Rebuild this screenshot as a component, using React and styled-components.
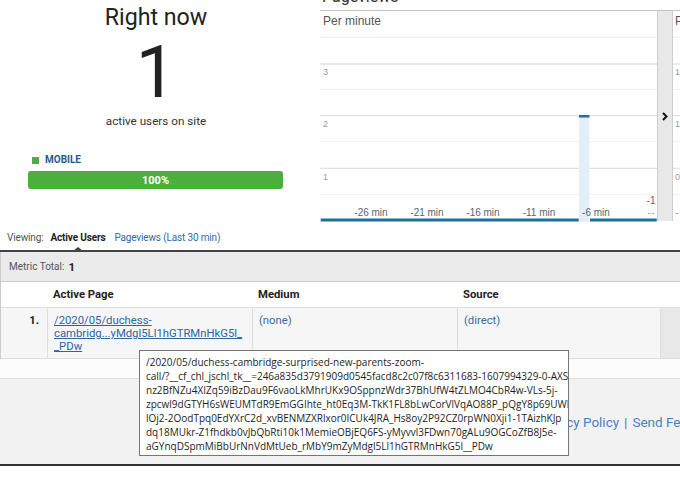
import React from 'react';
import styled, { createGlobalStyle } from 'styled-components';

const Global = createGlobalStyle`
  *, *::before, *::after { box-sizing: border-box; }
  html, body { margin: 0; padding: 0; background: #fff; }
  body {
    font-family: Roboto, "Noto Sans", Arial, sans-serif;
    color: #222;
    overflow: hidden;
  }
`;

const Page = styled.div`
  position: relative;
  width: 680px;
  height: 500px;
  overflow: hidden;
  background: #fff;
`;

const Top = styled.div`
  display: flex;
  height: 230px;
`;

const NowPanel = styled.section`
  width: 312px;
  flex: none;
  display: flex;
  flex-direction: column;
  align-items: center;
  padding-top: 3px;
`;

const NowTitle = styled.h1`
  margin: 0;
  font-size: 23.2px;
  line-height: 28px;
  font-weight: 400;
  color: #222;
`;

const NowCount = styled.div`
  margin-top: 6px;
  font-size: 72px;
  line-height: 72px;
  font-weight: 400;
  color: #222;
`;

const NowLabel = styled.div`
  margin-top: 5px;
  font-size: 11.7px;
  line-height: 14px;
  color: #333;
`;

const DeviceBlock = styled.div`
  align-self: stretch;
  padding: 0 29px 0 28px;
  margin-top: 26px;
`;

const Legend = styled.div`
  display: flex;
  align-items: center;
  gap: 6px;
  padding-left: 4px;
  font-size: 10px;
  line-height: 12px;
  font-weight: 700;
  color: #1f5a92;
`;

const Swatch = styled.span`
  width: 7px;
  height: 7px;
  background: ${p => p.$color};
`;

const ShareBar = styled.div`
  margin-top: 5px;
  height: 18px;
  border-radius: 3px;
  background: ${p => p.$color};
  color: #fff;
  font-size: 11px;
  font-weight: 700;
  display: flex;
  align-items: center;
  justify-content: center;
`;

const ChartColumn = styled.section`
  flex: 1;
  min-width: 0;
  margin: -13px 0 0 8px;
  display: flex;
  flex-direction: column;
`;

const ChartTitle = styled.h2`
  margin: 0 0 3px 2px;
  font-size: 16px;
  line-height: 20px;
  font-weight: 400;
  color: #333;
`;

const ChartRow = styled.div`
  display: flex;
  border-top: 1px solid #c4c4c4;
  height: 212px;
`;

const ChartPanel = styled.div`
  width: 337px;
  flex: none;
  svg { display: block; }
`;

const ScrollHandle = styled.div`
  width: 16px;
  flex: none;
  height: 210px;
  background: #e8e8e8;
  border-left: 1px solid #cdcdcd;
  border-right: 1px solid #cdcdcd;
  display: flex;
  align-items: center;
  justify-content: center;
`;

const NextPanel = styled.div`
  flex: 1;
  overflow: hidden;
  svg { display: block; }
`;

const ViewingBar = styled.nav`
  height: 22px;
  display: flex;
  align-items: center;
  padding: 0 0 5px 7px;
  font-size: 10px;
  letter-spacing: -0.15px;
  border-bottom: 2px solid #444;
`;

const ViewLabel = styled.span`
  color: #555;
  margin-right: 7px;
`;

const ViewTab = styled.span`
  position: relative;
  margin-right: 9px;
  color: ${p => (p.$active ? '#222' : '#2f6aa6')};
  font-weight: ${p => (p.$active ? 700 : 400)};
  ${p =>
    p.$active &&
    `
    &::after {
      content: '';
      position: absolute;
      left: 50%;
      bottom: -8px;
      margin-left: -5px;
      border-left: 5px solid transparent;
      border-right: 5px solid transparent;
      border-bottom: 4px solid #444;
    }
  `}
`;

const MetricBar = styled.div`
  height: 30px;
  display: flex;
  align-items: center;
  gap: 4px;
  padding-left: 8px;
  background: #ebebeb;
  border-left: 1px solid #ccc;
  border-bottom: 1px solid #ccc;
  font-size: 10px;
  color: #555;
  b { color: #222; font-size: 11.5px; }
`;

const Table = styled.div`
  border-left: 1px solid #ccc;
`;

const Row = styled.div`
  display: grid;
  grid-template-columns: 46px 205px 205px 203px 1fr;
  height: ${p => p.$h}px;
  border-bottom: 1px solid #ddd;
`;

const HeadCell = styled.div`
  padding: 0 6px;
  font-size: 11.3px;
  line-height: 25px;
  font-weight: 700;
  color: #222;
`;

const Cell = styled.div`
  padding: 6px 6px 0;
  font-size: 11.3px;
  line-height: 13px;
  background: ${p => p.$bg || '#f6f6f6'};
  border-left: ${p => (p.$first ? 'none' : '1px solid #dedede')};
  text-align: ${p => (p.$num ? 'right' : 'left')};
  padding-right: ${p => (p.$num ? '8px' : '6px')};
  font-weight: ${p => (p.$num ? 700 : 400)};
  color: #222;
`;

const PageLink = styled.a`
  color: #2c64a4;
  text-decoration: underline;
`;

const Plain = styled.span`
  color: #3a6c9e;
`;

const Spacer = styled.div`
  height: 20px;
  background: #fcfcfc;
  border-bottom: 1px solid #ddd;
`;

const FooterArea = styled.footer`
  height: 87px;
  background: #f2f2f2;
  border-bottom: 2px solid #333;
  display: flex;
  align-items: center;
  padding-left: 536px;
  white-space: nowrap;
  font-size: 13.5px;
  color: #4a80c8;
`;

const FootLink = styled.span`
  color: #4a80c8;
`;

const Sep = styled.span`
  margin: 0 5px;
`;

const Tooltip = styled.div`
  position: absolute;
  left: 139px;
  top: 350px;
  width: 430px;
  height: 106px;
  background: #fff;
  border: 1px solid #767676;
  padding: 4px 6px 0;
  overflow: hidden;
  font-family: "Open Sans", "Noto Sans", sans-serif;
  font-size: 10px;
  line-height: 14px;
  color: #1e1e1e;
`;

const TipLine = styled.div`
  white-space: nowrap;
`;

const grid = [
  { y: 26.3, major: false },
  { y: 53, major: true },
  { y: 78.3, major: false },
  { y: 104.7, major: true },
  { y: 130.7, major: false },
  { y: 157.3, major: true },
  { y: 183.3, major: false },
];

const ticks = [
  { x: 51, t: '-26 min' },
  { x: 107, t: '-21 min' },
  { x: 163, t: '-16 min' },
  { x: 219, t: '-11 min' },
  { x: 276, t: '-6 min' },
];

const AXIS = '#1f6e9c';

function MinuteChart() {
  return (
    <svg width="337" height="211" viewBox="0 0 337 211" fontFamily="'Liberation Sans', Arial, sans-serif">
      <text x="3" y="13.5" fontSize="12" fill="#555">Per minute</text>
      {grid.map(g => (
        <line key={g.y} x1="0" x2="337" y1={g.y} y2={g.y} stroke={g.major ? '#e2e2e2' : '#f3f3f3'} strokeWidth="1.3" />
      ))}
      <text x="3" y="64" fontSize="9" fill="#999">3</text>
      <text x="3" y="115.5" fontSize="9" fill="#999">2</text>
      <text x="3" y="168.5" fontSize="9" fill="#999">1</text>
      <rect x="259" y="104" width="10.5" height="107" fill="#e3eff8" />
      <rect x="259" y="104" width="10.5" height="2.5" fill={AXIS} />
      {ticks.map(t => (
        <text key={t.t} x={t.x} y="204.5" fontSize="10" fill="#5a6470" textAnchor="middle">{t.t}</text>
      ))}
      <text x="331" y="192.5" fontSize="10" fill="#5a6470" textAnchor="middle">-1</text>
      <text x="331" y="203" fontSize="9" fill="#777" textAnchor="middle">...</text>
      <rect x="0.7" y="207.5" width="258" height="3" fill={AXIS} />
      <rect x="270" y="207.5" width="66.7" height="3" fill={AXIS} />
    </svg>
  );
}

function NextChart() {
  return (
    <svg width="20" height="211" viewBox="0 0 20 211" fontFamily="'Liberation Sans', Arial, sans-serif">
      {grid.map(g => (
        <line key={g.y} x1="0" x2="20" y1={g.y} y2={g.y} stroke={g.major ? '#e2e2e2' : '#f3f3f3'} strokeWidth="1.3" />
      ))}
      <text x="2" y="13.5" fontSize="12" fill="#555">P</text>
      <text x="2" y="64" fontSize="9" fill="#999">1</text>
      <text x="2" y="115.5" fontSize="9" fill="#999">1</text>
      <text x="2" y="168.5" fontSize="9" fill="#999">0</text>
      <text x="2" y="204.5" fontSize="10" fill="#999">-</text>
    </svg>
  );
}

const tipLines = [
  '/2020/05/duchess-cambridge-surprised-new-parents-zoom-',
  'call/?__cf_chl_jschl_tk__=246a835d3791909d0545facd8c2c07f8c6311683-1607994329-0-AXS9',
  'nz2BfNZu4XIZq59iBzDau9F6vaoLkMhrUKx9OSppnzWdr37BhUfW4tZLMO4CbR4w-VLs-5j-',
  'zpcwl9dGTYH6sWEUMTdR9EmGGIhte_ht0Eq3M-TkK1FL8bLwCorVlVqAO88P_pQgY8p69UWk',
  'lOj2-2OodTpq0EdYXrC2d_xvBENMZXRlxor0ICUk4JRA_Hs8oy2P92CZ0rpWN0Xji1-1TAizhKJp',
  'dq18MUkr-Z1fhdkb0vJbQbRti10k1MemieOBjEQ6FS-yMyvvl3FDwn70gALu9OGCoZfB8J5e-',
  'aGYnqDSpmMiBbUrNnVdMtUeb_rMbY9mZyMdgl5Ll1hGTRMnHkG5l__PDw',
];

export default function App() {
  return (
    <Page>
      <Global />
      <Top>
        <NowPanel>
          <NowTitle>Right now</NowTitle>
          <NowCount>1</NowCount>
          <NowLabel>active users on site</NowLabel>
          <DeviceBlock>
            <Legend>
              <Swatch $color="#4cae3c" />
              MOBILE
            </Legend>
            <ShareBar $color="#4cae3c">100%</ShareBar>
          </DeviceBlock>
        </NowPanel>
        <ChartColumn>
          <ChartTitle>Pageviews</ChartTitle>
          <ChartRow>
            <ChartPanel>
              <MinuteChart />
            </ChartPanel>
            <ScrollHandle>
              <svg width="6" height="9" viewBox="0 0 6 9">
                <path d="M1 1 L4.5 4.5 L1 8" fill="none" stroke="#111" strokeWidth="2" />
              </svg>
            </ScrollHandle>
            <NextPanel>
              <NextChart />
            </NextPanel>
          </ChartRow>
        </ChartColumn>
      </Top>

      <ViewingBar>
        <ViewLabel>Viewing:</ViewLabel>
        <ViewTab $active>Active Users</ViewTab>
        <ViewTab>Pageviews (Last 30 min)</ViewTab>
      </ViewingBar>

      <MetricBar>
        Metric Total: <b>1</b>
      </MetricBar>

      <Table>
        <Row $h={26}>
          <HeadCell />
          <HeadCell>Active Page</HeadCell>
          <HeadCell>Medium</HeadCell>
          <HeadCell>Source</HeadCell>
          <HeadCell />
        </Row>
        <Row $h={51}>
          <Cell $first $num>1.</Cell>
          <Cell>
            <PageLink href="#">
              /2020/05/duchess-
              <br />
              cambridg...yMdgl5Ll1hGTRMnHkG5l_
              <br />
              _PDw
            </PageLink>
          </Cell>
          <Cell><Plain>(none)</Plain></Cell>
          <Cell><Plain>(direct)</Plain></Cell>
          <Cell $bg="#e8e8e8" />
        </Row>
      </Table>

      <Spacer />
      <FooterArea>
        <FootLink>Privacy Policy</FootLink>
        <Sep>|</Sep>
        <FootLink>Send Feedback</FootLink>
      </FooterArea>

      <Tooltip role="tooltip">
        {tipLines.map(l => (
          <TipLine key={l}>{l}</TipLine>
        ))}
      </Tooltip>
    </Page>
  );
}
